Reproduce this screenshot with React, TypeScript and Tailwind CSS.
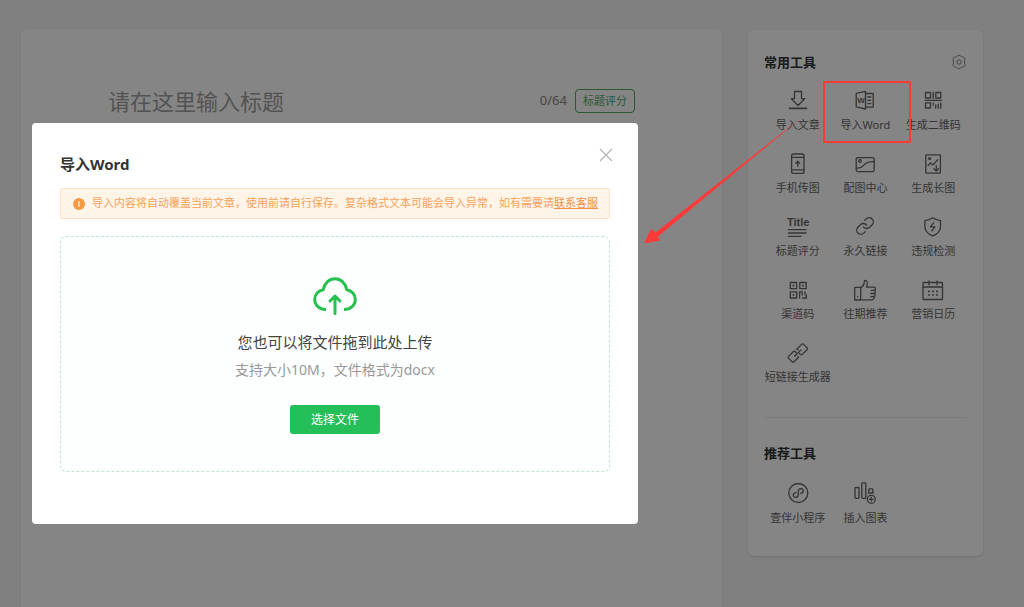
import React from "react";
import { Link as LinkIcon } from "lucide-react";

type Tool = {
  label: string;
  icon: React.ReactNode;
  marked?: boolean;
};

function Icon({ children }: { children: React.ReactNode }) {
  return (
    <svg
      viewBox="0 0 24 24"
      className="size-6"
      fill="none"
      stroke="currentColor"
      strokeWidth="1.3"
      strokeLinecap="round"
      strokeLinejoin="round"
      aria-hidden="true"
    >
      {children}
    </svg>
  );
}

const COMMON_TOOLS: Tool[] = [
  {
    label: "导入文章",
    icon: (
      <Icon>
        <path d="M8.5 3.5h7v7.2h3.2L12 17.5l-6.7-6.8h3.2z" />
        <path d="M3.5 20.4h17" strokeWidth="1.6" />
      </Icon>
    ),
  },
  {
    label: "导入Word",
    marked: true,
    icon: (
      <Icon>
        <path d="M12.5 3.3 3.2 5.3v13.6l9.3 2.1zM12.500 5.500h7.700v13.600h-7.700" />
        <path d="M14.800 9h3M14.800 12.300h3M14.800 15.600h3" />
        <text
          x="4.200"
          y="15"
          fontSize="8"
          fontWeight="700"
          fontFamily="Liberation Sans, sans-serif"
          fill="currentColor"
          stroke="none"
        >
          W
        </text>
      </Icon>
    ),
  },
  {
    label: "生成二维码",
    icon: (
      <Icon>
        <path d="M4.500 4.500h5v5.500h-5zM14.800 4.500h5v5.500h-5zM12.200 4.200v6.200M4.200 12.400h16M4.500 14.800h5v5.200h-5z" />
        <path d="M12.200 14.800v2.200M14.700 17v3.200M17.200 16.200v4M19.700 14.800v5.400" />
      </Icon>
    ),
  },
  {
    label: "手机传图",
    icon: (
      <Icon>
        <rect x="5.600" y="3" width="12.400" height="19.400" rx="2" />
        <path d="M5.600 6.400H18M5.600 18.800H18M11.800 15.500v-5M9.900 12.200l1.900-1.900 1.900 1.900" />
      </Icon>
    ),
  },
  {
    label: "配图中心",
    icon: (
      <Icon>
        <rect x="3.200" y="6.600" width="18" height="14" rx="1.500" />
        <circle cx="7" cy="10" r="1.300" />
        <path d="M3.400 17c3.200.4 5.400-.4 7.200-2.600 2.400-2.900 5-3.900 10.400-3.700" />
      </Icon>
    ),
  },
  {
    label: "生成长图",
    icon: (
      <Icon>
        <rect x="4.800" y="3.800" width="14.600" height="18.400" rx=".6" />
        <circle cx="8.600" cy="7.600" r="1" />
        <path d="m7 14.400 2.700-2.500 2.300 2 4.800-5.200M15.300 14.600v5.200M13 17.700l2.300 2.300 2.300-2.300" />
      </Icon>
    ),
  },
  {
    label: "标题评分",
    icon: (
      <Icon>
        <text
          x="1"
          y="12"
          fontSize="11"
          fontWeight="700"
          fontFamily="Liberation Sans, sans-serif"
          fill="currentColor"
          stroke="none"
        >
          Title
        </text>
        <path d="M2.500 15.700h17.500M2.500 19h17.500M2.500 22.300h12.500" />
      </Icon>
    ),
  },
  {
    label: "永久链接",
    icon: (
      <LinkIcon className="size-6 p-0.5" strokeWidth={1.6} aria-hidden="true" />
    ),
  },
  {
    label: "违规检测",
    icon: (
      <Icon>
        <path d="M11.700 3.800c2.200 1.700 4.700 2.600 7.800 2.800v6c0 4.300-2.900 7.500-7.800 9.300-4.900-1.800-7.800-5-7.800-9.300v-6c3.100-.2 5.600-1.100 7.800-2.800z" />
        <path d="m12.600 8.800-3.200 4h4.600l-3.200 4" />
      </Icon>
    ),
  },
  {
    label: "渠道码",
    icon: (
      <Icon>
        <path d="M4.300 5.500h6.400v6.200H4.300zM13.800 5.500h6.400v6.200h-6.400zM4.300 14.800h6.400V21H4.300z" />
        <path
          d="M7.500 8.500v.2M17 8.500v.2M7.500 17.800v.2"
          strokeWidth="1.800"
        />
        <path d="M13.600 21v-6.200h2.600V18M19 14.800v3M16.600 21h3.800v-3" />
      </Icon>
    ),
  },
  {
    label: "往期推荐",
    icon: (
      <Icon>
        <path d="M1.700 10.400h6V23h-6zM7.700 10.600c2-.8 3.100-2.200 3.400-4.400l.4-2.600c1.800-.5 2.900.6 2.900 2.600 0 1.500-.3 2.700-.8 3.900h7.400c1.900 0 1.900 3 .3 3.200 1.500.4 1.300 3 0 3.200 1.200.4 1 2.900-.4 3.100.8 1-.1 3.200-1.700 3.300H7.700" />
        <path d="M18.200 13.300h3M17.800 16.500h3.400M17.600 19.700h3M4.600 19.600v.2" />
      </Icon>
    ),
  },
  {
    label: "营销日历",
    icon: (
      <Icon>
        <rect x="2" y="5.500" width="19.500" height="17" rx=".6" />
        <path d="M2 10h19.500M8 3.800v4M16 3.800v4" />
        <path
          d="M8 14.300v.1M12 14.300v.1M16 14.300v.1M8 18v.1M12 18v.1M16 18v.1"
          strokeWidth="1.900"
        />
      </Icon>
    ),
  },
  {
    label: "短链接生成器",
    icon: (
      <Icon>
        <path d="m11 9 4.600-4.600q1-1 2 0l3.400 3.400q1 1 0 2l-4.600 4.600q-1 1-2 0l-.9-.9" />
        <path d="m11 9 .8.800M12.600 17.200 8 21.800q-1 1-2 0l-3.400-3.400q-1-1 0-2l4.600-4.600q1-1 2 0l.9.900M12.600 17.200l-.8-.8" />
        <path d="m8.600 16.300 6.400-6.400" />
      </Icon>
    ),
  },
];

const RECOMMENDED_TOOLS: Tool[] = [
  {
    label: "壹伴小程序",
    icon: (
      <Icon>
        <circle cx="12.300" cy="12" r="9.500" />
        <path d="M10 11.600c-3.400.4-3.600 4.600-.5 4.800 1.700 0 2.800-1 2.800-2.700v-3.400c0-1.700 1.100-2.700 2.800-2.700 3.100.2 2.900 4.400-.5 4.800" />
      </Icon>
    ),
  },
  {
    label: "插入图表",
    icon: (
      <Icon>
        <rect x="2" y="6.500" width="4" height="10.800" rx=".8" />
        <rect x="8.800" y="1.800" width="4" height="15.500" rx=".8" />
        <path d="M15.800 12V8.600q0-.8.8-.8h2.400q.8 0 .8.800V12zM15.300 12h5" />
        <circle cx="18.300" cy="18.300" r="4" />
        <path d="M18.300 16.500v3.600M16.500 18.300h3.600" />
      </Icon>
    ),
  },
];

/** Red frame and arrow pointing from the tool to its dialog */
function Marker() {
  return (
    <>
      <span className="absolute -top-[7px] -bottom-[8px] -left-[9px] -right-[12px] z-20 border-2 border-[#f93b37] pointer-events-none" />
      <svg
        viewBox="0 0 164 132"
        className="absolute right-full top-[25px] mr-[25px] z-20 h-[132px] w-[164px] max-w-none pointer-events-none"
        aria-hidden="true"
      >
        <defs>
          <linearGradient id="arrow-fade" x1="0" x2="1" y1="1" y2="0">
            <stop offset="0.85" stopColor="#fd3a37" />
            <stop offset="1" stopColor="#fd3a37" stopOpacity="0.3" />
          </linearGradient>
        </defs>
        <path
          d="M1 130.500 8 116l4.500 3.500L163 1 15 123.500l2 4z"
          fill="url(#arrow-fade)"
        />
      </svg>
    </>
  );
}

function ToolGrid({ tools }: { tools: Tool[] }) {
  return (
    <div className="grid grid-cols-3 gap-y-4">
      {tools.map((tool) => (
        <div key={tool.label} className="relative">
          <button
            type="button"
            className="flex w-full flex-col items-center gap-[3px] text-[#666]"
          >
            {tool.icon}
            <span className="text-[11px] leading-5 whitespace-nowrap">
              {tool.label}
            </span>
          </button>
          {tool.marked && <Marker />}
        </div>
      ))}
    </div>
  );
}

function Sidebar() {
  return (
    <aside className="mt-px w-[235px] shrink-0 self-start rounded-md bg-white px-4 pt-[22px] pb-7 shadow-sm">
      <div className="mb-4 flex items-center justify-between">
        <h2 className="text-[13px] leading-5 font-bold text-[#333]">常用工具</h2>
        <button type="button" aria-label="设置" className="text-[#888]">
          <svg
            viewBox="0 0 16 16"
            className="size-4"
            fill="none"
            stroke="currentColor"
            strokeLinejoin="round"
          >
            <path d="M6.600 1.600q1.400-.8 2.800 0l1 1.100 2 .5q1.600.4 1.600 2.200l-.5 1.600v2l.5 1.600q0 1.800-1.600 2.200l-2 .5-1 1.100q-1.400.8-2.800 0l-1-1.100-2-.5Q2 12.400 2 10.600L2.500 9V7L2 5.400q0-1.800 1.600-2.200l2-.5z" />
            <circle cx="8" cy="8" r="2.200" />
          </svg>
        </button>
      </div>
      <ToolGrid tools={COMMON_TOOLS} />
      <hr className="mt-[30px] mb-[25px] border-[#eee]" />
      <h2 className="mb-[18px] text-[13px] leading-5 font-bold text-[#333]">
        推荐工具
      </h2>
      <ToolGrid tools={RECOMMENDED_TOOLS} />
    </aside>
  );
}

function Editor() {
  return (
    <main className="min-w-0 flex-1 rounded-t-md bg-white px-[87px] pt-[56px] shadow-sm">
      <div className="flex items-center">
        <input
          type="text"
          aria-label="标题"
          placeholder="请在这里输入标题"
          className="h-8 min-w-0 flex-1 text-[22px] text-[#555] outline-none placeholder:text-[#a0a0a0]"
        />
        <span className="mr-2 text-[13px] text-[#888]">0/64</span>
        <button
          type="button"
          className="h-6 rounded border border-[#56a866] px-[7px] text-[11px] text-[#56a866]"
        >
          标题评分
        </button>
      </div>
    </main>
  );
}

function ImportDialog() {
  return (
    <div
      role="dialog"
      aria-modal="true"
      aria-labelledby="import-title"
      className="relative w-[606px] rounded bg-white px-[28px] pt-[29px] pb-[52px]"
    >
      <h1
        id="import-title"
        className="text-[15px] leading-6 font-bold text-[#333]"
      >
        导入Word
      </h1>
      <button
        type="button"
        aria-label="关闭"
        className="absolute top-[25px] right-[25px] text-[#b5b5b5]"
      >
        <svg
          viewBox="0 0 14 14"
          className="size-[14px]"
          stroke="currentColor"
          strokeWidth="1.300"
        >
          <path d="m1 1 12 12M13 1 1 13" />
        </svg>
      </button>

      {/** Notice */}
      <div className="mt-3 flex h-[31px] items-center gap-[7px] rounded-xs border border-[#ffe3c8] bg-[#fff4e8] px-[12px] text-[11px] text-[#f5a25a]">
        <svg viewBox="0 0 12 12" className="size-3 shrink-0" aria-hidden="true">
          <circle cx="6" cy="6" r="6" fill="#f39a45" />
          <path d="M6 3v6" stroke="#fff4e8" strokeWidth="1.200" />
        </svg>
        <p className="whitespace-nowrap">
          导入内容将自动覆盖当前文章，使用前请自行保存。复杂格式文本可能会导入异常，如有需要请
          <a href="#contact" className="text-[#f0924a] underline">
            联系客服
          </a>
        </p>
      </div>

      {/** Drop zone */}
      <div className="mt-[17px] flex flex-col items-center rounded-md border border-dashed border-[#bfe8cc] bg-[#fcfffe] pt-[40px] pb-[37px]">
        <svg
          viewBox="0 0 44 38"
          className="h-[38px] w-[44px]"
          fill="none"
          stroke="#28c04f"
          strokeWidth="3"
          strokeLinejoin="round"
          aria-hidden="true"
        >
          <path d="M13 32.500c-6.500 0-11.300-4.400-11.300-10 0-5 3.600-9 8.600-9.800C11.300 6.300 16 1.800 22 1.800s10.700 4.500 11.700 10.900c5 .8 8.600 4.800 8.600 9.800 0 5.600-4.800 10-11.300 10" />
          <path d="M22 36.500V19.500M17 24l5-4.800 5 4.800" strokeLinecap="round" />
        </svg>
        <p className="mt-[14px] text-[15px] leading-[27px] text-[#444]">
          您也可以将文件拖到此处上传
        </p>
        <p className="text-[14px] leading-[27px] text-[#999]">
          支持大小10M，文件格式为docx
        </p>
        <button
          type="button"
          className="mt-[22px] h-[29px] w-[90px] rounded-[3px] bg-[#25bf5a] text-[12px] text-white"
        >
          选择文件
        </button>
      </div>
    </div>
  );
}

function App() {
  return (
    <div className="flex min-h-screen gap-[26px] bg-[#f6f6f6] pt-[29px] pr-[41px] pl-[21px] font-['Noto_Sans','Noto_Sans_CJK_SC',sans-serif]">
      <Editor />
      <Sidebar />
      <div className="fixed inset-0 z-10 bg-black/48 pt-[123px] pl-8">
        <ImportDialog />
      </div>
    </div>
  );
}

export default App;
